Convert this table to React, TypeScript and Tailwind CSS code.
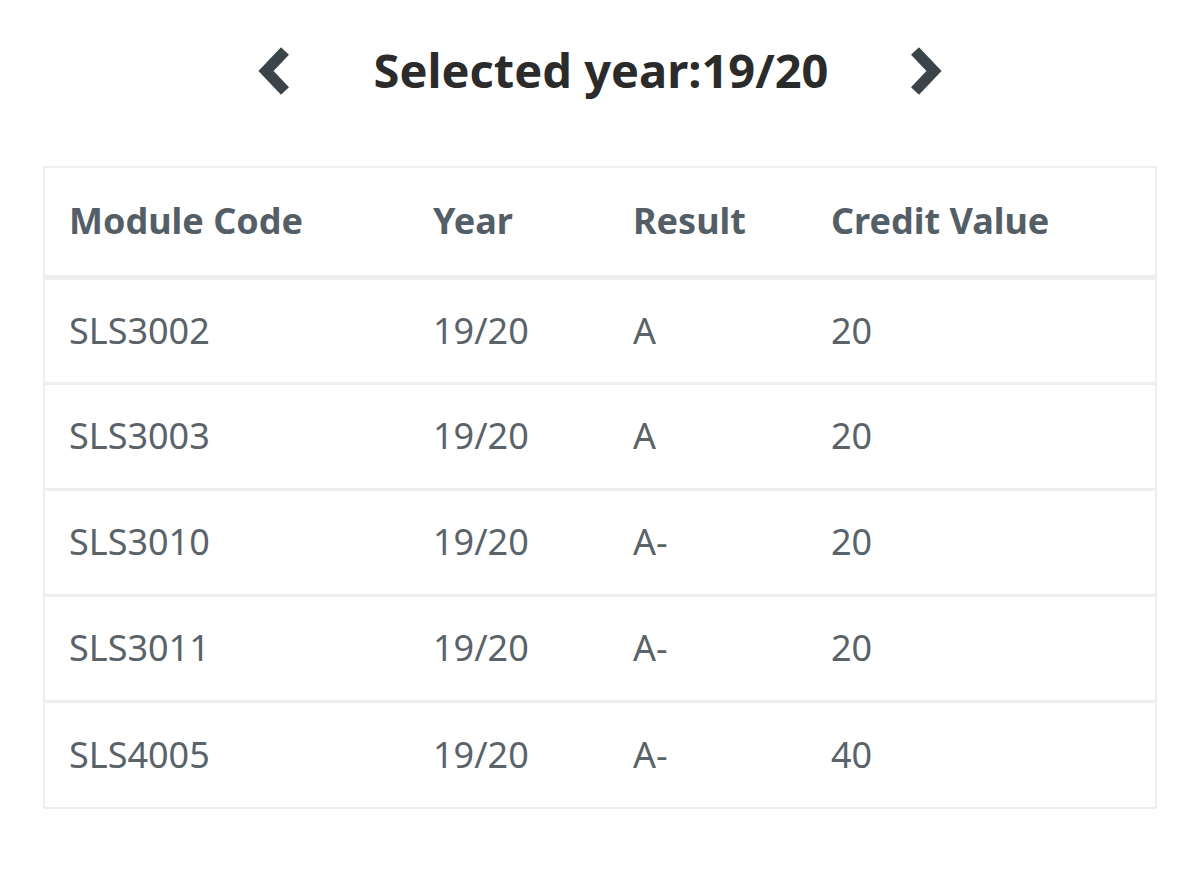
import React from "react";

const rows = [
  ["SLS3002", "19/20", "A", "20"],
  ["SLS3003", "19/20", "A", "20"],
  ["SLS3010", "19/20", "A-", "20"],
  ["SLS3011", "19/20", "A-", "20"],
  ["SLS4005", "19/20", "A-", "40"],
];

export default function App() {
  return (
    <div className="w-[1200px] h-[889px] bg-white overflow-hidden" style={{ fontFamily: '"Noto Sans", sans-serif' }}>
      <div className="flex items-center justify-center h-[145px] pb-[4px]">
        <svg width="32" height="48" viewBox="0 0 32 48" className="mr-[84px]">
          <polyline points="27,4 8,24 27,44" fill="none" stroke="#3b4449" strokeWidth="11" strokeLinejoin="miter" strokeLinecap="butt" strokeMiterlimit="10" />
        </svg>
        <div className="text-[47px] font-bold text-[#2b2b2b] leading-none">Selected year:19/20</div>
        <svg width="32" height="48" viewBox="0 0 32 48" className="ml-[82px]">
          <polyline points="5,4 24,24 5,44" fill="none" stroke="#3b4449" strokeWidth="11" strokeLinejoin="miter" strokeLinecap="butt" strokeMiterlimit="10" />
        </svg>
      </div>
      <div className="mx-[43px] mt-[21px] border-2 border-[#eceef0]">
        <table className="w-full border-collapse">
          <thead>
            <tr className="h-[109px] border-b-[5px] border-[#eceef0]">
              <th className="w-[364px] text-left pl-[24px] text-[36px] font-bold text-[#545e66]">Module Code</th>
              <th className="w-[200px] text-left pl-[24px] text-[36px] font-bold text-[#545e66]">Year</th>
              <th className="w-[198px] text-left pl-[24px] text-[36px] font-bold text-[#545e66]">Result</th>
              <th className="text-left pl-[24px] text-[36px] font-bold text-[#545e66]">Credit Value</th>
            </tr>
          </thead>
          <tbody>
            {rows.map((r, i) => (
              <tr key={i} className={`h-[106px] ${i < rows.length - 1 ? "border-b-[3px] border-[#eceef0]" : ""}`}>
                {r.map((c, j) => (
                  <td key={j} className="pl-[24px] text-[36px] text-[#5a6369]">{c}</td>
                ))}
              </tr>
            ))}
          </tbody>
        </table>
      </div>
    </div>
  );
}
